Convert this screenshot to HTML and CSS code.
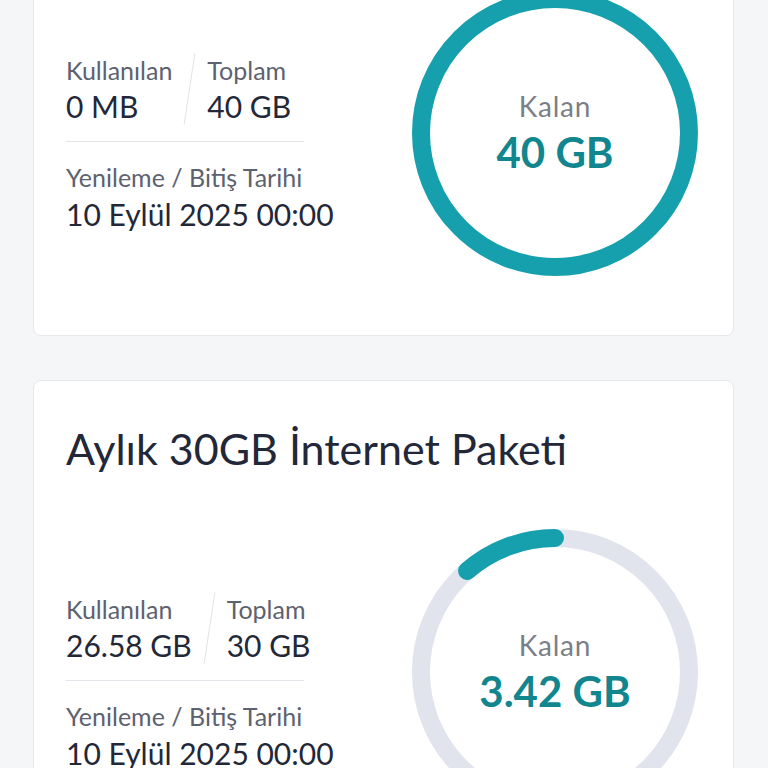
FILE: index.html
```html
<!DOCTYPE html>
<html lang="tr">
<head>
    <meta charset="UTF-8">
    <meta name="viewport" content="width=device-width, initial-scale=1.0">
    <title>Paketlerim</title>
    <link rel="stylesheet" href="styles.css">
</head>
<body>
    <div class="package-list">
        <div class="package-card">
            <h3 class="package-title">Hoş Geldin 40GB İnternet Paketi</h3>
            <div class="package-body">
                <div class="usage-info">
                    <div class="usage-row">
                        <div class="usage-col">
                            <span class="usage-label">Kullanılan</span>
                            <span class="usage-value">0 MB</span>
                        </div>
                        <span class="usage-slash"></span>
                        <div class="usage-col">
                            <span class="usage-label">Toplam</span>
                            <span class="usage-value">40 GB</span>
                        </div>
                    </div>
                    <div class="usage-divider"></div>
                    <span class="usage-label">Yenileme / Bitiş Tarihi</span>
                    <span class="usage-date">10 Eylül 2025 00:00</span>
                </div>
                <div class="ring">
                    <svg width="286" height="286" viewBox="0 0 286 286">
                        <circle cx="143" cy="143" r="134" fill="none" stroke="#16a0ad" stroke-width="18"/>
                    </svg>
                    <div class="ring-text">
                        <span class="ring-label">Kalan</span>
                        <span class="ring-value">40 GB</span>
                    </div>
                </div>
            </div>
        </div>

        <div class="package-card">
            <h3 class="package-title">Aylık 30GB İnternet Paketi</h3>
            <div class="package-body">
                <div class="usage-info">
                    <div class="usage-row">
                        <div class="usage-col">
                            <span class="usage-label">Kullanılan</span>
                            <span class="usage-value">26.58 GB</span>
                        </div>
                        <span class="usage-slash"></span>
                        <div class="usage-col">
                            <span class="usage-label">Toplam</span>
                            <span class="usage-value">30 GB</span>
                        </div>
                    </div>
                    <div class="usage-divider"></div>
                    <span class="usage-label">Yenileme / Bitiş Tarihi</span>
                    <span class="usage-date">10 Eylül 2025 00:00</span>
                </div>
                <div class="ring">
                    <svg width="286" height="286" viewBox="0 0 286 286">
                        <circle cx="143" cy="143" r="134" fill="none" stroke="#e1e4ec" stroke-width="18"/>
                        <!-- 3.42 / 30 kalan, saat 12'den saat yönünün tersine -->
                        <path d="M 143 9 A 134 134 0 0 0 55.1 41.9" fill="none" stroke="#16a0ad" stroke-width="18" stroke-linecap="round"/>
                    </svg>
                    <div class="ring-text">
                        <span class="ring-label">Kalan</span>
                        <span class="ring-value">3.42 GB</span>
                    </div>
                </div>
            </div>
        </div>
    </div>
</body>
</html>
```

FILE: styles.css
```css
body {
    font-family: Lato, "Open Sans", sans-serif;
    margin: 0;
    padding: 0 34px 0 33px;
    background-color: #f5f6f8;
    color: #232838;
    overflow: hidden;
}
.package-list {
    display: flex;
    flex-direction: column;
    gap: 44px;
    margin-top: -159px;
}
.package-card {
    background-color: white;
    border: 1px solid #e6e8ec;
    border-radius: 8px;
    padding: 42px 35px 59px 32px;
}
.package-title {
    margin: 0 0 54px 0;
    font-size: 43px;
    line-height: 52px;
    font-weight: 400;
    color: #232838;
}
.package-body {
    display: flex;
    justify-content: space-between;
    align-items: center;
}
.usage-info {
    display: flex;
    flex-direction: column;
    width: 238px;
    margin-top: 20px;
}
.usage-row {
    display: flex;
}
.usage-col {
    display: flex;
    flex-direction: column;
}
.usage-label {
    font-size: 25px;
    line-height: 34px;
    color: #5d6270;
    white-space: nowrap;
}
.usage-value {
    font-size: 30px;
    line-height: 38px;
    color: #232838;
    white-space: nowrap;
}
.usage-slash {
    flex-shrink: 0;
    width: 1px;
    margin: 0 17px;
    background-color: #e1e3e8;
    transform: rotate(8.6deg);
}
.usage-divider {
    height: 1px;
    background-color: #e3e5ea;
    margin: 16px 0 18px 0;
}
.usage-date {
    font-size: 30px;
    line-height: 40px;
    color: #232838;
    white-space: nowrap;
}
.ring {
    position: relative;
    width: 286px;
    height: 286px;
    flex-shrink: 0;
}
.ring svg {
    display: block;
}
.ring-text {
    position: absolute;
    inset: 0;
    display: flex;
    flex-direction: column;
    align-items: center;
    justify-content: center;
    gap: 6px;
}
.ring-label {
    font-size: 28px;
    line-height: 32px;
    letter-spacing: 0.8px;
    color: #7b7f88;
}
.ring-value {
    font-size: 42px;
    line-height: 48px;
    font-weight: 700;
    color: #12868e;
}
```
